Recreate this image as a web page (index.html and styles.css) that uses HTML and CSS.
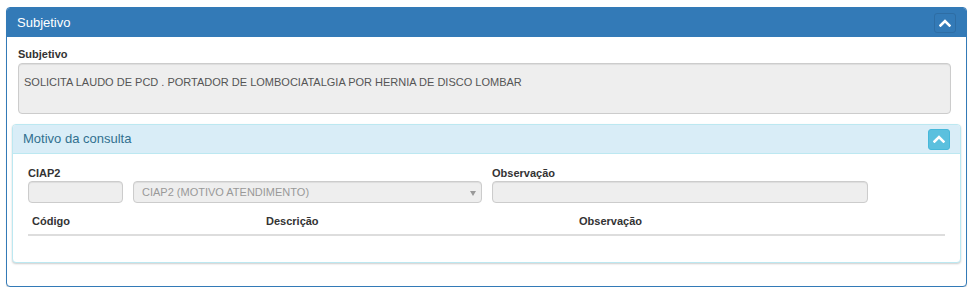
FILE: index.html
```html
<!DOCTYPE html>
<html lang="pt">
<head>
<meta charset="utf-8">
<title>Subjetivo</title>
<link rel="stylesheet" href="styles.css">
</head>
<body>
<section class="panel panel-primary">
  <header class="panel-heading">
    <span class="panel-title">Subjetivo</span>
    <button class="btn btn-primary" type="button" aria-label="Recolher">
      <svg width="12" height="8" viewBox="0 0 12 8"><polyline points="1.5,6.5 6,2 10.5,6.5" fill="none" stroke="#fff" stroke-width="2.6" stroke-linecap="square"/></svg>
    </button>
  </header>
  <div class="panel-body">
    <div class="form-group">
      <label class="lbl">Subjetivo</label>
      <div class="textarea">SOLICITA LAUDO DE PCD . PORTADOR DE LOMBOCIATALGIA POR HERNIA DE DISCO LOMBAR</div>
    </div>
    <section class="panel panel-info">
      <header class="panel-heading">
        <span class="panel-title">Motivo da consulta</span>
        <button class="btn btn-info" type="button" aria-label="Recolher">
          <svg width="12" height="8" viewBox="0 0 12 8"><polyline points="1.5,6.5 6,2 10.5,6.5" fill="none" stroke="#fff" stroke-width="2.6" stroke-linecap="square"/></svg>
        </button>
      </header>
      <div class="panel-body inner-body">
        <div class="fields">
          <div class="field f-code">
            <label class="lbl">CIAP2</label>
            <div class="input"></div>
          </div>
          <div class="field f-select">
            <label class="lbl">&nbsp;</label>
            <div class="input select"><span class="ph">CIAP2 (MOTIVO ATENDIMENTO)</span><span class="arrow"></span></div>
          </div>
          <div class="field f-obs">
            <label class="lbl">Observação</label>
            <div class="input"></div>
          </div>
        </div>
        <table class="table">
          <thead>
            <tr><th class="c1">Código</th><th class="c2">Descrição</th><th>Observação</th></tr>
          </thead>
        </table>
      </div>
    </section>
  </div>
</section>
</body>
</html>
```
FILE: styles.css
```css
* { box-sizing: border-box; }
html, body { margin: 0; padding: 0; background: #fff; }
body {
  font-family: "Liberation Sans", Arial, sans-serif;
  font-size: 11px;
  color: #333;
  padding: 7px 7px 0 6px;
}
.panel {
  border: 1px solid #337ab7;
  border-radius: 4px;
  background: #fff;
  box-shadow: 0 1px 1px rgba(0,0,0,.15);
}
.panel > .panel-heading {
  display: flex;
  align-items: center;
  justify-content: space-between;
  height: 29px;
  padding: 0 10px 0 10px;
  background: #337ab7;
  color: #fff;
  border-top-left-radius: 3px;
  border-top-right-radius: 3px;
}
.panel-title { font-size: 13px; line-height: 16px; }
.btn {
  display: flex;
  align-items: center;
  justify-content: center;
  width: 22px;
  height: 20px;
  padding: 0;
  border-radius: 3px;
  cursor: pointer;
}
.btn-primary { background: #337ab7; border: 1px solid #2e6da4; }
.panel-body { padding: 10px 5px 23px 5px; }
.form-group { padding: 0 10px 0 6px; margin-bottom: 10px; }
.lbl {
  display: block;
  font-weight: bold;
  font-size: 11px;
  line-height: 15px;
  margin-bottom: 1px;
}
.textarea {
  height: 51px;
  background: #eee;
  border: 1px solid #ccc;
  border-radius: 4px;
  padding: 11px 5px 9px;
  font-size: 11px;
  line-height: 15px;
  color: #555;
  box-shadow: inset 0 1px 1px rgba(0,0,0,.075);
}
.panel-info {
  border-color: #bce8f1;
  box-shadow: 0 1px 2px rgba(0,0,0,.2);
}
.panel-info > .panel-heading {
  height: 29px;
  background: #d9edf7;
  color: #31708f;
  border-bottom: 1px solid #bce8f1;
  padding: 0 10px 0 10px;
}
.panel-info .panel-title { font-size: 13px; }
.btn-info { background: #5bc0de; border: 1px solid #46b8da; width: 22px; height: 21px; }
.inner-body { padding: 12px 15px 26px 15px; }
.fields { display: flex; gap: 10px; }
.field .lbl { margin-bottom: 0; }
.f-code { width: 95px; }
.f-select { width: 349px; }
.f-obs { width: 376px; }
.input {
  height: 22px;
  background: #eee;
  border: 1px solid #ccc;
  border-radius: 4px;
  box-shadow: inset 0 1px 1px rgba(0,0,0,.075);
}
.select {
  display: flex;
  align-items: center;
  justify-content: space-between;
  padding: 0 5px 0 8px;
}
.ph { color: #999; font-size: 11px; line-height: 15px; }
.arrow {
  width: 0; height: 0;
  border-left: 3.5px solid transparent;
  border-right: 3.5px solid transparent;
  border-top: 5px solid #999;
  margin-top: 3px;
}
.table {
  width: 100%;
  border-collapse: collapse;
  margin-top: 6px;
}
.table th {
  text-align: left;
  font-weight: bold;
  font-size: 11px;
  line-height: 15px;
  padding: 5px 4px;
  border-bottom: 2px solid #ddd;
}
.table th.c1 { width: 234px; }
.table th.c2 { width: 313px; }
```
